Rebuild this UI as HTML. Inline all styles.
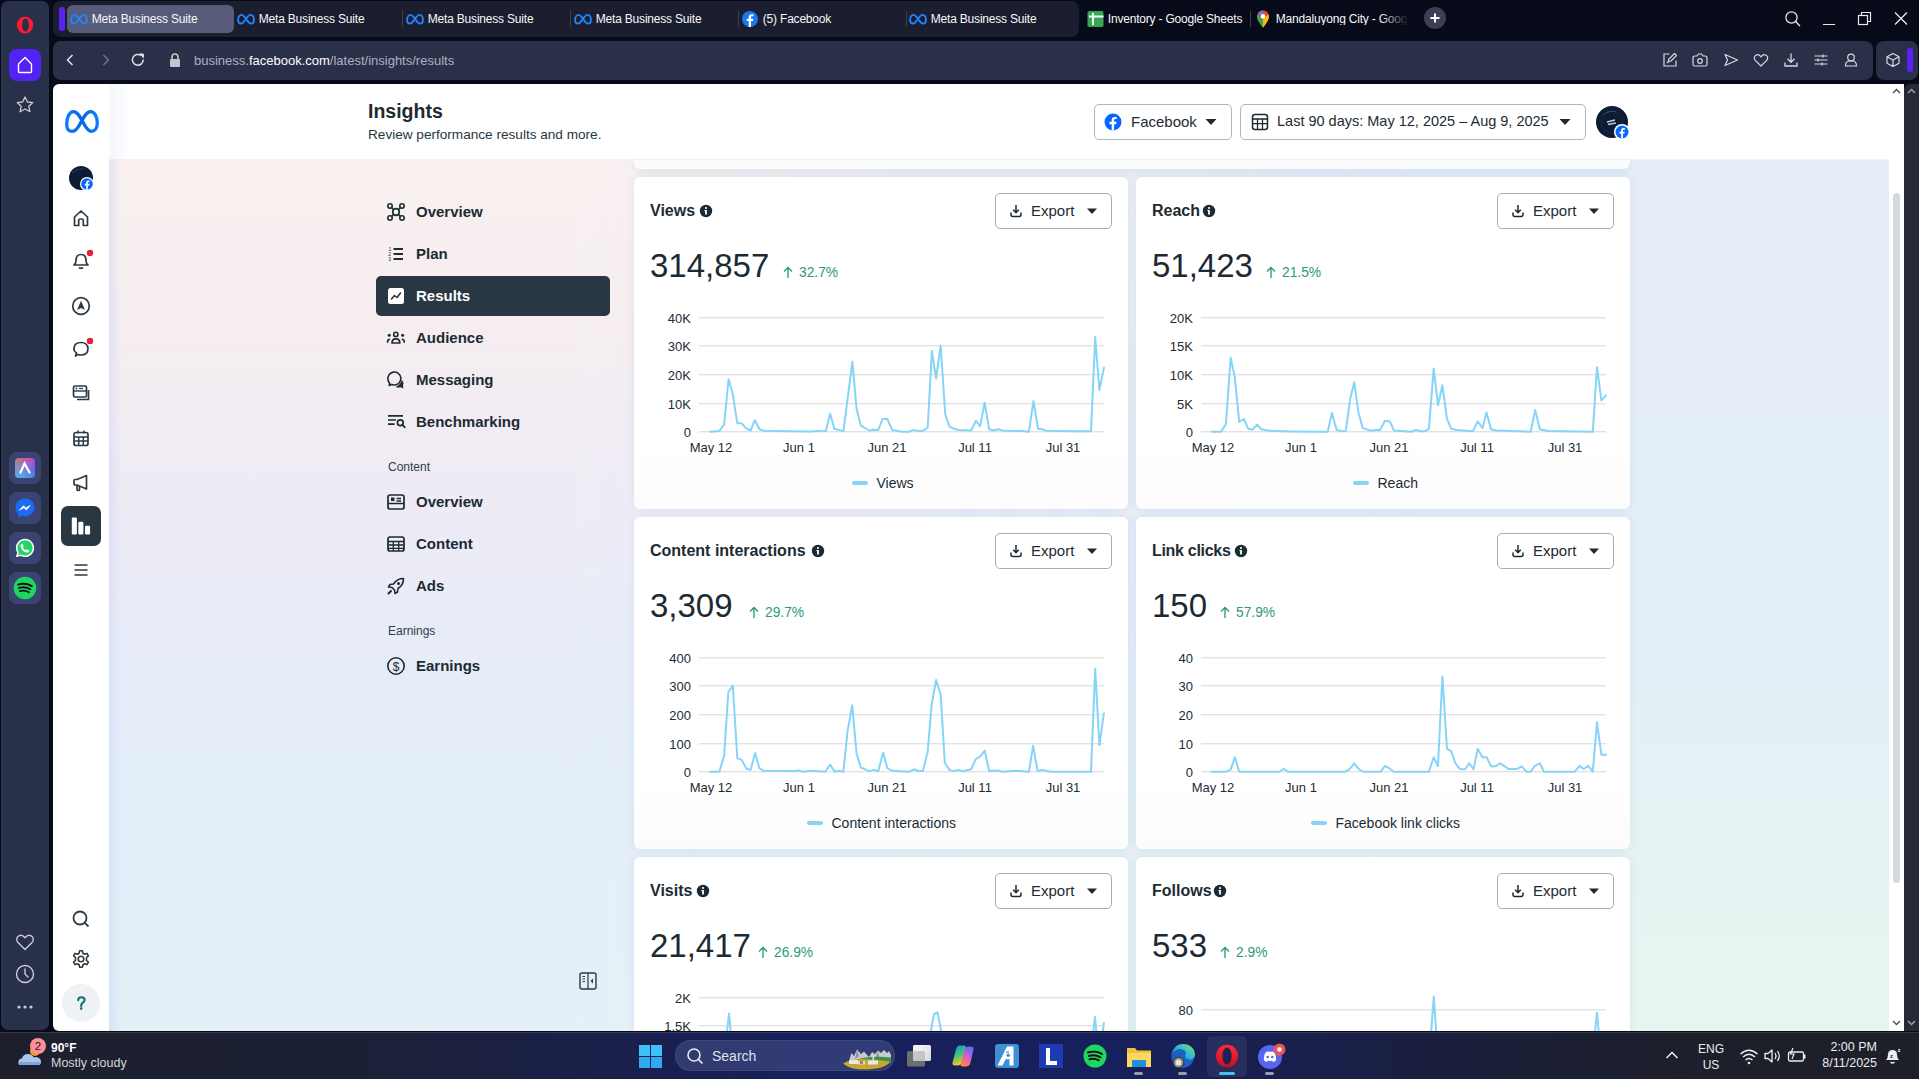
<!DOCTYPE html>
<html><head><meta charset="utf-8"><title>Insights</title>
<style>
html,body{margin:0;padding:0;width:1919px;height:1079px;overflow:hidden;background:#070a18;}
.r{position:absolute;display:block;}
.t{position:absolute;white-space:nowrap;line-height:1;font-family:"Liberation Sans", sans-serif;}
#vp{position:absolute;left:0;top:0;width:1919px;height:1030px;overflow:hidden;}
</style></head><body>
<div class="r" style="left:0px;top:0px;width:1919px;height:1032px;background:#070a18;"></div>
<div class="r" style="left:1px;top:1px;width:48px;height:1029px;background:#29304a;border-radius:7px;"></div>
<svg class="r" style="left:13px;top:13px;" width="24" height="24" viewBox="0 0 24 24"><ellipse cx="12" cy="12" rx="8.2" ry="8.6" fill="#ff1b2d"/><ellipse cx="12.4" cy="12" rx="3.4" ry="6.6" fill="#29304a"/></svg>
<div class="r" style="left:9px;top:49px;width:32px;height:32px;background:#5322f5;border-radius:8px;"></div>
<svg class="r" style="left:9px;top:49px;" width="32" height="32" viewBox="0 0 32 32"><path d="M9.5,15 L16,8.5 L22.5,15 L22.5,22.5 Q22.5,23.5 21.5,23.5 L10.5,23.5 Q9.5,23.5 9.5,22.5 Z" fill="none" stroke="#fff" stroke-width="1.4" stroke-linejoin="round"/></svg>
<svg class="r" style="left:13px;top:93px;" width="24" height="24" viewBox="0 0 24 24"><path d="M12,4 L14.4,9 L19.8,9.6 L15.8,13.3 L16.9,18.7 L12,16 L7.1,18.7 L8.2,13.3 L4.2,9.6 L9.6,9 Z" fill="none" stroke="#c9ccd6" stroke-width="1.3" stroke-linejoin="round"/></svg>
<div class="r" style="left:9px;top:452px;width:32px;height:32px;background:#3a4472;border-radius:8px;"></div>
<div class="r" style="left:9px;top:492px;width:32px;height:32px;background:#3a4472;border-radius:8px;"></div>
<div class="r" style="left:9px;top:532px;width:32px;height:32px;background:#3a4472;border-radius:8px;"></div>
<div class="r" style="left:9px;top:572px;width:32px;height:32px;background:#3a4472;border-radius:8px;"></div>
<svg class="r" style="left:14px;top:457px;" width="22" height="22" viewBox="0 0 22 22"><defs><linearGradient id="ag" x1="0" y1="0" x2="1" y2="1"><stop offset="0" stop-color="#f2603a"/><stop offset="0.5" stop-color="#b44fd6"/><stop offset="1" stop-color="#4a3ff5"/></linearGradient><linearGradient id="ag2" x1="0" y1="1" x2="0.6" y2="0"><stop offset="0" stop-color="#40c8e8" stop-opacity="0.9"/><stop offset="1" stop-color="#40c8e8" stop-opacity="0"/></linearGradient></defs><rect x="1" y="1" width="20" height="20" rx="4" fill="url(#ag)"/><rect x="1" y="1" width="20" height="20" rx="4" fill="url(#ag2)"/><path d="M6.5,15.5 L10.5,6.5 L15.5,15.5" fill="none" stroke="#fff" stroke-width="2.2" stroke-linecap="round"/></svg>
<svg class="r" style="left:14px;top:497px;" width="22" height="22" viewBox="0 0 22 22"><path d="M11,1.5 C5.6,1.5 1.5,5.4 1.5,10.6 C1.5,13.3 2.6,15.6 4.4,17.2 L4.4,20.5 L7.5,18.8 C8.6,19.1 9.8,19.3 11,19.3 C16.4,19.3 20.5,15.4 20.5,10.3 C20.5,5.4 16.4,1.5 11,1.5 Z" fill="#1b6cf5"/><path d="M5.5,13 L9.5,8.8 L11.7,11 L16.3,8.6 L12.3,12.9 L10.1,10.7 Z" fill="#fff" stroke="#fff" stroke-width="0.8" stroke-linejoin="round"/></svg>
<svg class="r" style="left:14px;top:537px;" width="22" height="22" viewBox="0 0 22 22"><path d="M11,1.8 C6,1.8 1.9,5.9 1.9,10.9 C1.9,12.6 2.4,14.2 3.2,15.6 L1.8,20.3 L6.6,19 C7.9,19.7 9.4,20.1 11,20.1 C16,20.1 20.1,16 20.1,11 C20.1,5.9 16,1.8 11,1.8 Z" fill="#fff"/><path d="M11,3.3 C6.8,3.3 3.4,6.7 3.4,10.9 C3.4,12.5 3.9,14 4.8,15.2 L4,18.2 L7.1,17.4 C8.2,18.1 9.6,18.5 11,18.5 C15.2,18.5 18.6,15.1 18.6,10.9 C18.6,6.7 15.2,3.3 11,3.3 Z" fill="#25d366"/><path d="M7.8,6.8 C8.2,6.6 8.6,6.7 8.8,7.1 L9.6,9 C9.7,9.3 9.6,9.6 9.4,9.8 L8.9,10.3 C9.5,11.6 10.5,12.6 11.8,13.2 L12.3,12.6 C12.5,12.4 12.8,12.3 13.1,12.5 L14.9,13.4 C15.3,13.6 15.4,14 15.2,14.3 C14.7,15.3 13.7,15.8 12.6,15.5 C9.6,14.7 7.3,12.4 6.6,9.4 C6.3,8.3 6.9,7.2 7.8,6.8 Z" fill="#fff"/></svg>
<svg class="r" style="left:13px;top:576px;" width="24" height="24" viewBox="0 0 24 24"><circle cx="12" cy="12" r="11.3" fill="#1ed760"/><path d="M5.2,8.6 C9.3,7.3 14.6,7.7 18.8,10.1 M6,11.9 C9.6,10.9 14,11.3 17.3,13.3 M6.8,15.1 C9.8,14.3 13.2,14.6 15.8,16.2" fill="none" stroke="#111" stroke-width="1.9" stroke-linecap="round"/></svg>
<svg class="r" style="left:13px;top:930px;" width="24" height="24" viewBox="0 0 24 24"><path d="M12,19.5 L5,12.5 C3,10.5 3.3,7 5.8,5.8 C7.9,4.8 10.3,5.6 12,7.8 C13.7,5.6 16.1,4.8 18.2,5.8 C20.7,7 21,10.5 19,12.5 Z" fill="none" stroke="#c9ccd6" stroke-width="1.4" stroke-linejoin="round"/></svg>
<svg class="r" style="left:13px;top:962px;" width="24" height="24" viewBox="0 0 24 24"><circle cx="12" cy="12" r="8.5" fill="none" stroke="#c9ccd6" stroke-width="1.4"/><path d="M12,7 L12,12 L15,15" fill="none" stroke="#c9ccd6" stroke-width="1.4" stroke-linecap="round"/></svg>
<svg class="r" style="left:13px;top:995px;" width="24" height="24" viewBox="0 0 24 24"><circle cx="6" cy="12" r="1.6" fill="#c9ccd6"/><circle cx="12" cy="12" r="1.6" fill="#c9ccd6"/><circle cx="18" cy="12" r="1.6" fill="#c9ccd6"/></svg>
<div class="r" style="left:53px;top:1px;width:1026px;height:36px;background:#1b1e2f;border-radius:8px;"></div>
<div class="r" style="left:59px;top:7px;width:6px;height:24px;background:#5b20f6;border-radius:3px;"></div>
<div class="r" style="left:67px;top:5px;width:167px;height:28px;background:#585c7b;border-radius:6px;"></div>
<svg class="r" style="left:69px;top:10px;" width="20" height="18" viewBox="0 0 20 18"><g transform="translate(10,9.2) scale(0.88) translate(-10,-6)"><path d="M1,7.5 C1,3.5 2.8,1 5,1 C7.3,1 9,3.8 11,7 C12.8,9.9 14.2,11 15.6,11 C17.6,11 19,9.3 19,6.8 C19,3.3 17.3,1 15,1 C12.7,1 11,3.8 9,7 C7.2,9.9 5.8,11 4.4,11 C2.4,11 1,9.8 1,7.5 Z" fill="none" stroke="#1f84ff" stroke-width="2.1" stroke-linejoin="round"/></g></svg>
<div class="t" style="left:91.8px;top:12.84px;font-size:12px;color:#f7f7fa;font-weight:normal;letter-spacing:-0.2px;">Meta Business Suite</div>
<svg class="r" style="left:236px;top:10px;" width="20" height="18" viewBox="0 0 20 18"><g transform="translate(10,9.2) scale(0.88) translate(-10,-6)"><path d="M1,7.5 C1,3.5 2.8,1 5,1 C7.3,1 9,3.8 11,7 C12.8,9.9 14.2,11 15.6,11 C17.6,11 19,9.3 19,6.8 C19,3.3 17.3,1 15,1 C12.7,1 11,3.8 9,7 C7.2,9.9 5.8,11 4.4,11 C2.4,11 1,9.8 1,7.5 Z" fill="none" stroke="#1f84ff" stroke-width="2.1" stroke-linejoin="round"/></g></svg>
<div class="t" style="left:258.8px;top:12.84px;font-size:12px;color:#f7f7fa;font-weight:normal;letter-spacing:-0.2px;">Meta Business Suite</div>
<svg class="r" style="left:405px;top:10px;" width="20" height="18" viewBox="0 0 20 18"><g transform="translate(10,9.2) scale(0.88) translate(-10,-6)"><path d="M1,7.5 C1,3.5 2.8,1 5,1 C7.3,1 9,3.8 11,7 C12.8,9.9 14.2,11 15.6,11 C17.6,11 19,9.3 19,6.8 C19,3.3 17.3,1 15,1 C12.7,1 11,3.8 9,7 C7.2,9.9 5.8,11 4.4,11 C2.4,11 1,9.8 1,7.5 Z" fill="none" stroke="#1f84ff" stroke-width="2.1" stroke-linejoin="round"/></g></svg>
<div class="t" style="left:427.8px;top:12.84px;font-size:12px;color:#f7f7fa;font-weight:normal;letter-spacing:-0.2px;">Meta Business Suite</div>
<svg class="r" style="left:573px;top:10px;" width="20" height="18" viewBox="0 0 20 18"><g transform="translate(10,9.2) scale(0.88) translate(-10,-6)"><path d="M1,7.5 C1,3.5 2.8,1 5,1 C7.3,1 9,3.8 11,7 C12.8,9.9 14.2,11 15.6,11 C17.6,11 19,9.3 19,6.8 C19,3.3 17.3,1 15,1 C12.7,1 11,3.8 9,7 C7.2,9.9 5.8,11 4.4,11 C2.4,11 1,9.8 1,7.5 Z" fill="none" stroke="#1f84ff" stroke-width="2.1" stroke-linejoin="round"/></g></svg>
<div class="t" style="left:595.8px;top:12.84px;font-size:12px;color:#f7f7fa;font-weight:normal;letter-spacing:-0.2px;">Meta Business Suite</div>
<svg class="r" style="left:741px;top:10px;" width="18" height="18" viewBox="0 0 18 18"><circle cx="9" cy="9" r="8" fill="#1877f2"/><path d="M10,17 L10,11 L12,11 L12.4,8.8 L10,8.8 L10,7.4 C10,6.7 10.3,6.3 11.1,6.3 L12.5,6.3 L12.5,4.3 C12,4.2 11.3,4.2 10.6,4.2 C8.7,4.2 7.7,5.3 7.7,7.2 L7.7,8.8 L5.7,8.8 L5.7,11 L7.7,11 L7.7,17 Z" fill="#fff"/></svg>
<div class="t" style="left:762.8px;top:12.84px;font-size:12px;color:#f7f7fa;font-weight:normal;letter-spacing:-0.2px;">(5) Facebook</div>
<svg class="r" style="left:908px;top:10px;" width="20" height="18" viewBox="0 0 20 18"><g transform="translate(10,9.2) scale(0.88) translate(-10,-6)"><path d="M1,7.5 C1,3.5 2.8,1 5,1 C7.3,1 9,3.8 11,7 C12.8,9.9 14.2,11 15.6,11 C17.6,11 19,9.3 19,6.8 C19,3.3 17.3,1 15,1 C12.7,1 11,3.8 9,7 C7.2,9.9 5.8,11 4.4,11 C2.4,11 1,9.8 1,7.5 Z" fill="none" stroke="#1f84ff" stroke-width="2.1" stroke-linejoin="round"/></g></svg>
<div class="t" style="left:930.8px;top:12.84px;font-size:12px;color:#f7f7fa;font-weight:normal;letter-spacing:-0.2px;">Meta Business Suite</div>
<svg class="r" style="left:1086px;top:10px;" width="18" height="18" viewBox="0 0 18 18"><rect x="1.5" y="1" width="16" height="16" rx="1.8" fill="#36a852"/><path d="M3,6.5 L17.5,6.5 M7,3 L7,15" stroke="#fff" stroke-width="1.9"/></svg>
<div class="t" style="left:1107.8px;top:12.84px;font-size:12px;color:#f7f7fa;font-weight:normal;letter-spacing:-0.2px;">Inventory - Google Sheets</div>
<svg class="r" style="left:1254px;top:9px;" width="18" height="20" viewBox="0 0 18 20"><path d="M9,1.5 C5.4,1.5 3,4.2 3,7.4 C3,11.5 9,18.5 9,18.5 C9,18.5 15,11.5 15,7.4 C15,4.2 12.6,1.5 9,1.5 Z" fill="#ea4335"/><path d="M3.5,5.5 L9,11 L9,18.5 C9,18.5 3,11.5 3,7.4 Z" fill="#34a853"/><path d="M14.5,5.3 L9,10.5 L9,18.5 C9,18.5 15,11.5 15,7.4 Z" fill="#fbbc04"/><path d="M4,4.3 C5,2.6 6.8,1.5 9,1.5 L9,7.5 Z" fill="#4285f4"/><circle cx="9" cy="7.4" r="2.3" fill="#fff"/></svg>
<div class="t" style="left:1275.8px;top:12.84px;font-size:12px;color:#f7f7fa;font-weight:normal;letter-spacing:-0.2px;max-width:136px;overflow:hidden;">Mandaluyong City - Google Maps</div>
<div class="r" style="left:1380px;top:8px;width:36px;height:22px;background:linear-gradient(90deg, rgba(7,10,24,0), #070a18 80%);"></div>
<div class="r" style="left:402px;top:11px;width:1px;height:16px;background:#3a3e52;"></div>
<div class="r" style="left:570px;top:11px;width:1px;height:16px;background:#3a3e52;"></div>
<div class="r" style="left:738px;top:11px;width:1px;height:16px;background:#3a3e52;"></div>
<div class="r" style="left:906px;top:11px;width:1px;height:16px;background:#3a3e52;"></div>
<div class="r" style="left:1250px;top:11px;width:1px;height:16px;background:#3a3e52;"></div>
<svg class="r" style="left:1424px;top:7px;" width="22" height="22" viewBox="0 0 22 22"><circle cx="11" cy="11" r="11" fill="#3b3f56"/><path d="M11,6.5 L11,15.5 M6.5,11 L15.5,11" stroke="#fff" stroke-width="2"/></svg>
<svg class="r" style="left:1783px;top:9px;" width="20" height="20" viewBox="0 0 20 20"><circle cx="8.5" cy="8.5" r="5.6" fill="none" stroke="#e8e9ee" stroke-width="1.3"/><path d="M12.6,12.6 L17,17" stroke="#e8e9ee" stroke-width="1.4"/></svg>
<div class="r" style="left:1823px;top:24px;width:12px;height:1.3px;background:#e8e9ee;"></div>
<svg class="r" style="left:1855px;top:9px;" width="20" height="20" viewBox="0 0 20 20"><rect x="3.5" y="6.5" width="9" height="9" fill="none" stroke="#e8e9ee" stroke-width="1.2"/><path d="M6.5,6.5 L6.5,3.5 L15.5,3.5 L15.5,12.5 L12.5,12.5" fill="none" stroke="#e8e9ee" stroke-width="1.2"/></svg>
<svg class="r" style="left:1891px;top:9px;" width="20" height="20" viewBox="0 0 20 20"><path d="M4,3.5 L16,15.5 M16,3.5 L4,15.5" stroke="#e8e9ee" stroke-width="1.3"/></svg>
<div class="r" style="left:53px;top:41px;width:1820px;height:39px;background:#2b3049;border-radius:8px;"></div>
<div class="r" style="left:1876px;top:41px;width:42px;height:39px;background:#2b3049;border-radius:8px;"></div>
<div class="r" style="left:1907px;top:48px;width:6px;height:24px;background:#5b20f6;border-radius:3px;"></div>
<svg class="r" style="left:60px;top:50px;" width="20" height="20" viewBox="0 0 20 20"><path d="M12.5,5 L7.5,10 L12.5,15" fill="none" stroke="#dfe1ea" stroke-width="1.5"/></svg>
<svg class="r" style="left:96px;top:50px;" width="20" height="20" viewBox="0 0 20 20"><path d="M7.5,5 L12.5,10 L7.5,15" fill="none" stroke="#6f7389" stroke-width="1.5"/></svg>
<svg class="r" style="left:128px;top:50px;" width="20" height="20" viewBox="0 0 20 20"><path d="M15.2,9.5 A5.4,5.4 0 1 1 13.2,5.6" fill="none" stroke="#dfe1ea" stroke-width="1.5"/><path d="M11.8,3.8 L15.6,4.2 L15.2,8" fill="#dfe1ea" stroke="#dfe1ea" stroke-width="1" stroke-linejoin="round"/></svg>
<svg class="r" style="left:165px;top:50px;" width="20" height="20" viewBox="0 0 20 20"><rect x="5" y="9" width="10" height="8" rx="1.2" fill="#c4c6ce"/><path d="M7,9.5 L7,7 A3,3 0 0 1 13,7 L13,9.5" fill="none" stroke="#c4c6ce" stroke-width="1.6"/></svg>
<div class="t" style="left:194px;top:54.00px;font-size:13px;color:#aeb1c0;font-weight:normal;">business.<span style="color:#ffffff">facebook.com</span>/latest/insights/results</div>
<svg class="r" style="left:1660px;top:50px;" width="20" height="20" viewBox="0 0 20 20"><path d="M9.5,4 L4,4 L4,16 L16,16 L16,10.5" fill="none" stroke="#d6d8e0" stroke-width="1.2"/><path d="M8,12 L9,9 L14.5,3.5 L16.5,5.5 L11,11 Z M7,13 L9,11" fill="none" stroke="#d6d8e0" stroke-width="1.2" stroke-linejoin="round"/></svg>
<svg class="r" style="left:1690px;top:50px;" width="20" height="20" viewBox="0 0 20 20"><path d="M3,8 Q3,6 5,6 L7,6 L8.5,4 L11.5,4 L13,6 L15,6 Q17,6 17,8 L17,14.5 Q17,16 15.5,16 L4.5,16 Q3,16 3,14.5 Z" fill="none" stroke="#d6d8e0" stroke-width="1.2"/><circle cx="10" cy="11" r="2.3" fill="none" stroke="#d6d8e0" stroke-width="1.2"/></svg>
<svg class="r" style="left:1721px;top:50px;" width="20" height="20" viewBox="0 0 20 20"><path d="M4,4.5 L16.5,10 L4,15.5 L6.5,10 Z" fill="none" stroke="#d6d8e0" stroke-width="1.2" stroke-linejoin="round"/></svg>
<svg class="r" style="left:1751px;top:50px;" width="20" height="20" viewBox="0 0 20 20"><path d="M10,16 L4.3,10.3 C2.8,8.8 3,6.2 4.8,5.2 C6.5,4.2 8.5,4.8 10,6.8 C11.5,4.8 13.5,4.2 15.2,5.2 C17,6.2 17.2,8.8 15.7,10.3 Z" fill="none" stroke="#d6d8e0" stroke-width="1.2" stroke-linejoin="round"/></svg>
<svg class="r" style="left:1781px;top:50px;" width="20" height="20" viewBox="0 0 20 20"><path d="M10,3.5 L10,12 M6.5,8.8 L10,12.3 L13.5,8.8 M4,12.5 L4,16 L16,16 L16,12.5" fill="none" stroke="#d6d8e0" stroke-width="1.3"/></svg>
<svg class="r" style="left:1811px;top:50px;" width="20" height="20" viewBox="0 0 20 20"><path d="M3.5,6 L16.5,6 M3.5,10 L16.5,10 M3.5,14 L16.5,14" stroke="#d6d8e0" stroke-width="1.2"/><path d="M12,4.5 L12,7.5 M7,8.5 L7,11.5 M11,12.5 L11,15.5" stroke="#d6d8e0" stroke-width="1.3"/></svg>
<svg class="r" style="left:1841px;top:50px;" width="20" height="20" viewBox="0 0 20 20"><circle cx="10" cy="7.5" r="3.3" fill="none" stroke="#d6d8e0" stroke-width="1.2"/><path d="M4.5,16 Q4.5,11.5 8,11 L12,11 Q15.5,11.5 15.5,16 Z" fill="none" stroke="#d6d8e0" stroke-width="1.2" stroke-linejoin="round"/></svg>
<svg class="r" style="left:1883px;top:50px;" width="20" height="20" viewBox="0 0 20 20"><path d="M10,3.5 L16,6.8 L16,13.3 L10,16.5 L4,13.3 L4,6.8 Z M4,6.8 L10,10 L16,6.8 M10,10 L10,16.5" fill="none" stroke="#d6d8e0" stroke-width="1.2" stroke-linejoin="round"/></svg>
<div class="r" style="left:53px;top:84px;width:1851px;height:947px;background:#ffffff;border-radius:6px 0 0 6px;"></div>
<div class="r" style="left:109px;top:160px;width:1780px;height:871px;background:linear-gradient(180deg, #e6edf8 0%, #e4eef8 35%, #e3eef8 50%, #e5f2f3 78%, #e8f5ee 100%);"></div>
<div class="r" style="left:109px;top:160px;width:1780px;height:871px;background:linear-gradient(180deg, #f9f0ef 0%, #f5edf0 20%, #eeebf5 40%, #e7ecf8 55%, #e4eef9 70%, #e4eff8 100%);-webkit-mask-image:linear-gradient(90deg, #000 0%, #000 25%, transparent 75%);mask-image:linear-gradient(90deg, #000 0%, #000 25%, transparent 75%);"></div>
<div class="r" style="left:109px;top:160px;width:12px;height:871px;background:linear-gradient(90deg, rgba(190,205,240,0.35), rgba(190,205,240,0));"></div>
<div class="r" style="left:109px;top:84px;width:1780px;height:76px;background:#ffffff;"></div>
<div class="r" style="left:109px;top:84px;width:24px;height:76px;background:linear-gradient(90deg, rgba(240,244,252,0.7), rgba(255,255,255,0));"></div>
<div class="r" style="left:109px;top:159px;width:1780px;height:1px;background:rgba(0,0,0,0.05);"></div>
<div class="t" style="left:368px;top:102.29px;font-size:19.5px;color:#1c2b33;font-weight:bold;">Insights</div>
<div class="t" style="left:368px;top:127.89px;font-size:13.6px;color:#27363f;font-weight:normal;">Review performance results and more.</div>
<div class="r" style="left:1094px;top:104px;width:138px;height:36px;background:#fff;border-radius:5px;box-sizing:border-box;border:1px solid #aeb7c2;"></div>
<svg class="r" style="left:1103px;top:112px;" width="20" height="20" viewBox="0 0 20 20"><circle cx="10" cy="10" r="8.5" fill="#0866ff"/><path d="M11.1,18.5 L11.1,12.2 L13.2,12.2 L13.6,9.8 L11.1,9.8 L11.1,8.3 C11.1,7.6 11.4,7.1 12.3,7.1 L13.7,7.1 L13.7,5 C13.2,4.9 12.5,4.9 11.8,4.9 C9.8,4.9 8.7,6.1 8.7,8.1 L8.7,9.8 L6.5,9.8 L6.5,12.2 L8.7,12.2 L8.7,18.5 Z" fill="#fff"/></svg>
<div class="t" style="left:1131px;top:114.00px;font-size:15px;color:#1c2b33;font-weight:normal;">Facebook</div>
<svg class="r" style="left:1204px;top:117px;" width="14" height="10" viewBox="0 0 14 10"><path d="M1.5,2 L12.5,2 L7,8 Z" fill="#1c2b33"/></svg>
<div class="r" style="left:1240px;top:104px;width:346px;height:36px;background:#fff;border-radius:5px;box-sizing:border-box;border:1px solid #aeb7c2;"></div>
<svg class="r" style="left:1250px;top:112px;" width="20" height="20" viewBox="0 0 20 20"><rect x="2.5" y="2.5" width="15" height="15" rx="2.5" fill="none" stroke="#1c2b33" stroke-width="1.5"/><path d="M2.5,7 L17.5,7 M2.5,11.7 L17.5,11.7 M7.5,7 L7.5,17.5 M12.5,7 L12.5,17.5" stroke="#1c2b33" stroke-width="1.3"/></svg>
<div class="t" style="left:1277px;top:114.43px;font-size:14.5px;color:#1c2b33;font-weight:normal;">Last 90 days: May 12, 2025 – Aug 9, 2025</div>
<svg class="r" style="left:1558px;top:117px;" width="14" height="10" viewBox="0 0 14 10"><path d="M1.5,2 L12.5,2 L7,8 Z" fill="#1c2b33"/></svg>
<svg class="r" style="left:1595px;top:105px;" width="36" height="36" viewBox="0 0 36 36"><circle cx="17" cy="17" r="16" fill="#0d1b34"/><circle cx="17" cy="17" r="11" fill="none" stroke="#1a2a48" stroke-width="1"/><path d="M12,17 L20,15 M13,19.5 L21,18" stroke="#c8ccd8" stroke-width="1.6"/><path d="M8,10 Q14,5 21,7" fill="none" stroke="#3c6fb0" stroke-width="1" stroke-dasharray="1.5 1"/><circle cx="27" cy="27" r="8" fill="#fff"/><circle cx="27" cy="27" r="6.5" fill="#0866ff"/><path d="M27.9,33.5 L27.9,28.6 L29.5,28.6 L29.8,26.8 L27.9,26.8 L27.9,25.7 C27.9,25.2 28.1,24.8 28.8,24.8 L29.9,24.8 L29.9,23.2 C29.5,23.1 29,23.1 28.4,23.1 C26.9,23.1 26.1,24 26.1,25.5 L26.1,26.8 L24.4,26.8 L24.4,28.6 L26.1,28.6 L26.1,33.5 Z" fill="#fff"/></svg>
<svg class="r" style="left:63px;top:107px;" width="38" height="28" viewBox="0 0 38 28"><defs><linearGradient id="mg" x1="0" y1="0" x2="1" y2="0"><stop offset="0" stop-color="#0a7cff"/><stop offset="0.5" stop-color="#0668e1"/><stop offset="1" stop-color="#0a7cff"/></linearGradient></defs><path d="M3.70,17.44 C3.70,9.60 6.76,4.70 10.50,4.70 C14.41,4.70 17.30,10.19 20.70,16.46 C23.76,22.14 26.14,24.30 28.52,24.30 C31.92,24.30 34.30,20.97 34.30,16.07 C34.30,9.21 31.41,4.70 27.50,4.70 C23.59,4.70 20.70,10.19 17.30,16.46 C14.24,22.14 11.86,24.30 9.48,24.30 C6.08,24.30 3.70,21.95 3.70,17.44 Z" fill="none" stroke="url(#mg)" stroke-width="3.3" stroke-linejoin="round"/></svg>
<svg class="r" style="left:67px;top:164px;" width="30" height="30" viewBox="0 0 30 30"><circle cx="14" cy="14" r="12" fill="#0d1b34"/><path d="M5,9 Q10,4 17,5" fill="none" stroke="#3c6fb0" stroke-width="0.8" stroke-dasharray="1.2 1"/><circle cx="20" cy="20" r="7" fill="#fff"/><circle cx="20" cy="20" r="5.8" fill="#0866ff"/><path d="M20.8,25.8 L20.8,21.4 L22.2,21.4 L22.5,19.8 L20.8,19.8 L20.8,18.9 C20.8,18.4 21,18.1 21.6,18.1 L22.6,18.1 L22.6,16.7 C22.2,16.6 21.8,16.6 21.3,16.6 C19.9,16.6 19.2,17.4 19.2,18.7 L19.2,19.8 L17.7,19.8 L17.7,21.4 L19.2,21.4 L19.2,25.8 Z" fill="#fff"/></svg>
<svg class="r" style="left:71px;top:208px;" width="20" height="20" viewBox="0 0 20 20"><path d="M3.5,17.5 L3.5,9 L10,3 L16.5,9 L16.5,17.5 L12.3,17.5 L12.3,12.5 Q12.3,11 10.8,11 L9.2,11 Q7.7,11 7.7,12.5 L7.7,17.5 Z" fill="none" stroke="#2b3a44" stroke-width="1.7" stroke-linejoin="round"/></svg>
<svg class="r" style="left:71px;top:251px;" width="20" height="20" viewBox="0 0 20 20"><path d="M3,14 Q5,12.5 5,9.5 Q5,3.5 10,3.5 Q15,3.5 15,9.5 Q15,12.5 17,14 Z" fill="none" stroke="#2b3a44" stroke-width="1.7" stroke-linejoin="round"/><path d="M8,16.5 Q10,18 12,16.5" fill="none" stroke="#2b3a44" stroke-width="1.7"/></svg>
<svg class="r" style="left:86px;top:249px;" width="8" height="8" viewBox="0 0 8 8"><circle cx="4" cy="4" r="3.2" fill="#e41e3f"/></svg>
<svg class="r" style="left:71px;top:296px;" width="20" height="20" viewBox="0 0 20 20"><circle cx="10" cy="10" r="8.3" fill="none" stroke="#2b3a44" stroke-width="1.7"/><path d="M10,4.8 L14,14 L10,12 L6,14 Z" fill="#2b3a44"/></svg>
<svg class="r" style="left:71px;top:339px;" width="20" height="20" viewBox="0 0 20 20"><path d="M4.5,17 L5.5,14 Q2.5,12 3,9 Q3.5,3.5 10,3.5 Q16.5,3.5 17,9.5 Q17,16 10,16 Q8,16 6.5,15.5 Z" fill="none" stroke="#2b3a44" stroke-width="1.7" stroke-linejoin="round"/></svg>
<svg class="r" style="left:86px;top:337px;" width="8" height="8" viewBox="0 0 8 8"><circle cx="4" cy="4" r="3.2" fill="#e41e3f"/></svg>
<svg class="r" style="left:71px;top:383px;" width="20" height="20" viewBox="0 0 20 20"><rect x="2.5" y="3" width="13" height="11" rx="1.5" fill="none" stroke="#2b3a44" stroke-width="1.7"/><path d="M2.5,8 L15.5,8" stroke="#2b3a44" stroke-width="1.4"/><circle cx="5.5" cy="5.5" r="0.9" fill="#2b3a44"/><path d="M8,5.5 L12,5.5" stroke="#2b3a44" stroke-width="1.2"/><path d="M17.5,7 L17.5,16.5 L6,16.5" fill="none" stroke="#2b3a44" stroke-width="1.7"/></svg>
<svg class="r" style="left:71px;top:428px;" width="20" height="20" viewBox="0 0 20 20"><rect x="3" y="4.5" width="14" height="13" rx="2" fill="none" stroke="#2b3a44" stroke-width="1.7"/><path d="M3,9 L17,9 M3,13 L17,13 M7.7,9 L7.7,17.5 M12.3,9 L12.3,17.5 M7,2.5 L7,5.5 M13,2.5 L13,5.5" stroke="#2b3a44" stroke-width="1.5"/></svg>
<svg class="r" style="left:71px;top:472px;" width="20" height="20" viewBox="0 0 20 20"><path d="M3,8.5 L3,12 Q3,13 4,13 L6,13 L15.5,17 L15.5,3.5 L6,7.5 L4,7.5 Q3,7.5 3,8.5 Z" fill="none" stroke="#2b3a44" stroke-width="1.7" stroke-linejoin="round"/><path d="M6,13 L6,17.5 Q6,18.5 7.3,18.5 Q8.5,18.5 8.5,17.5 L8.5,14" fill="none" stroke="#2b3a44" stroke-width="1.7"/></svg>
<div class="r" style="left:61px;top:506px;width:40px;height:40px;background:#283742;border-radius:7px;"></div>
<svg class="r" style="left:71px;top:516px;" width="20" height="20" viewBox="0 0 20 20"><rect x="0.8" y="1.4" width="5.1" height="17.1" rx="1.2" fill="#fff"/><rect x="7.3" y="5.8" width="5.1" height="12.7" rx="1.2" fill="#fff"/><rect x="14" y="9.7" width="5.1" height="8.8" rx="1.2" fill="#fff"/></svg>
<svg class="r" style="left:71px;top:560px;" width="20" height="20" viewBox="0 0 20 20"><path d="M3.5,5 L16.5,5 M3.5,10 L16.5,10 M3.5,15 L16.5,15" stroke="#2b3a44" stroke-width="1.7"/></svg>
<svg class="r" style="left:71px;top:909px;" width="20" height="20" viewBox="0 0 20 20"><circle cx="9" cy="9" r="6.5" fill="none" stroke="#2b3a44" stroke-width="1.8"/><path d="M13.8,13.8 L17.5,17.5" stroke="#2b3a44" stroke-width="1.8"/></svg>
<svg class="r" style="left:71px;top:949px;" width="20" height="20" viewBox="0 0 20 20"><path d="M8.6,1.8 L11.4,1.8 L11.9,4.3 L13.6,5.3 L16,4.4 L17.4,6.8 L15.5,8.5 L15.5,11.5 L17.4,13.2 L16,15.6 L13.6,14.7 L11.9,15.7 L11.4,18.2 L8.6,18.2 L8.1,15.7 L6.4,14.7 L4,15.6 L2.6,13.2 L4.5,11.5 L4.5,8.5 L2.6,6.8 L4,4.4 L6.4,5.3 L8.1,4.3 Z" fill="none" stroke="#2b3a44" stroke-width="1.6" stroke-linejoin="round"/><circle cx="10" cy="10" r="2.8" fill="none" stroke="#2b3a44" stroke-width="1.6"/></svg>
<svg class="r" style="left:61px;top:983px;" width="40" height="40" viewBox="0 0 40 40"><circle cx="20" cy="20" r="19" fill="#eff2f5"/><path d="M17.2,17.2 Q17.2,14.2 20.5,14.2 Q23.6,14.2 23.6,17 Q23.6,18.8 21.5,20 Q20.2,20.8 20.2,22.6 L20.2,23.3" fill="none" stroke="#17707f" stroke-width="2.1" stroke-linecap="round"/><circle cx="20.2" cy="25.6" r="1.3" fill="#17707f"/></svg>
<svg class="r" style="left:578px;top:971px;" width="20" height="20" viewBox="0 0 20 20"><rect x="2" y="2" width="16" height="16" rx="2" fill="none" stroke="#2b3a44" stroke-width="1.4"/><path d="M10,2 L10,18 M4.5,5.5 L7,5.5 M4.5,8 L7,8 M4.5,10.5 L7,10.5" stroke="#2b3a44" stroke-width="1.2"/><path d="M15,7.5 L12.5,10 L15,12.5 Z" fill="#2b3a44"/></svg>
<div class="r" style="left:376px;top:276px;width:234px;height:40px;background:#283742;border-radius:5px;"></div>
<div class="t" style="left:416px;top:203.80px;font-size:15px;color:#1c2b33;font-weight:bold;">Overview</div>
<svg class="r" style="left:386px;top:202px;" width="20" height="20" viewBox="0 0 20 20"><circle cx="4" cy="4" r="2.2" fill="none" stroke="#1c2b33" stroke-width="1.6"/><circle cx="16" cy="4" r="2.2" fill="none" stroke="#1c2b33" stroke-width="1.6"/><circle cx="4" cy="16" r="2.2" fill="none" stroke="#1c2b33" stroke-width="1.6"/><circle cx="16" cy="16" r="2.2" fill="none" stroke="#1c2b33" stroke-width="1.6"/><circle cx="10" cy="10" r="3.3" fill="none" stroke="#1c2b33" stroke-width="1.7"/><path d="M5.6,5.6 L7.7,7.7 M14.4,5.6 L12.3,7.7 M5.6,14.4 L7.7,12.3 M14.4,14.4 L12.3,12.3" stroke="#1c2b33" stroke-width="1.6"/></svg>
<div class="t" style="left:416px;top:245.80px;font-size:15px;color:#1c2b33;font-weight:bold;">Plan</div>
<svg class="r" style="left:386px;top:244px;" width="20" height="20" viewBox="0 0 20 20"><path d="M7.5,5 L17,5 M7.5,10 L17,10 M7.5,15 L17,15" stroke="#1c2b33" stroke-width="1.8"/><text x="2.5" y="7" font-size="5" font-family="Liberation Sans" fill="#1c2b33">1</text><text x="2.3" y="12" font-size="5" font-family="Liberation Sans" fill="#1c2b33">2</text><text x="2.3" y="17" font-size="5" font-family="Liberation Sans" fill="#1c2b33">3</text></svg>
<div class="t" style="left:416px;top:287.80px;font-size:15px;color:#ffffff;font-weight:bold;">Results</div>
<svg class="r" style="left:386px;top:286px;" width="20" height="20" viewBox="0 0 20 20"><rect x="2" y="2" width="16" height="16" rx="2.5" fill="#fff"/><path d="M5.5,13 L8.5,9.5 L11,11.5 L14.5,7" fill="none" stroke="#283742" stroke-width="1.6" stroke-linejoin="round" stroke-linecap="round"/></svg>
<div class="t" style="left:416px;top:329.80px;font-size:15px;color:#1c2b33;font-weight:bold;">Audience</div>
<svg class="r" style="left:386px;top:328px;" width="20" height="20" viewBox="0 0 20 20"><circle cx="9.8" cy="6.4" r="2.1" fill="none" stroke="#1c2b33" stroke-width="1.6"/><path d="M6,15 Q6,10.8 9.9,10.8 Q13.8,10.8 13.8,15 Z" fill="none" stroke="#1c2b33" stroke-width="1.7" stroke-linejoin="round"/><circle cx="3.2" cy="7.3" r="1.5" fill="#1c2b33"/><circle cx="16.6" cy="7.3" r="1.5" fill="#1c2b33"/><path d="M1.6,14.2 Q1.4,11.6 3.4,11.2 M18.2,14.2 Q18.4,11.6 16.4,11.2" fill="none" stroke="#1c2b33" stroke-width="1.6" stroke-linecap="round"/></svg>
<div class="t" style="left:416px;top:371.80px;font-size:15px;color:#1c2b33;font-weight:bold;">Messaging</div>
<svg class="r" style="left:386px;top:370px;" width="20" height="20" viewBox="0 0 20 20"><path d="M3.8,13.6 L3.2,15.4 L5.6,14.6 Q6.8,15 8.2,15 A6.5,6.5 0 1 0 2.2,10.5 Q2.6,12.3 3.8,13.6 Z" fill="none" stroke="#1c2b33" stroke-width="1.6" stroke-linejoin="round"/><path d="M16,9.8 Q18.2,12.6 17,15.6 L17.4,18.4 L14.6,17.2 Q12,18 9.6,16.9 Q14.4,15.4 16,9.8 Z" fill="#1c2b33"/></svg>
<div class="t" style="left:416px;top:413.80px;font-size:15px;color:#1c2b33;font-weight:bold;">Benchmarking</div>
<svg class="r" style="left:386px;top:412px;" width="20" height="20" viewBox="0 0 20 20"><path d="M2,3.8 L17,3.8 M2,8 L10,8 M2,12.2 L8.6,12.2" stroke="#1c2b33" stroke-width="1.7"/><circle cx="14.3" cy="10.8" r="2.9" fill="none" stroke="#1c2b33" stroke-width="1.7"/><path d="M16.4,12.9 L18.8,15.3" stroke="#1c2b33" stroke-width="1.8" stroke-linecap="round"/></svg>
<div class="t" style="left:416px;top:493.80px;font-size:15px;color:#1c2b33;font-weight:bold;">Overview</div>
<svg class="r" style="left:386px;top:492px;" width="20" height="20" viewBox="0 0 20 20"><rect x="2" y="3" width="16" height="14" rx="2" fill="none" stroke="#1c2b33" stroke-width="1.7"/><path d="M2,11.5 L18,11.5 M10.5,6.5 L15,6.5 M10.5,9 L15,9" stroke="#1c2b33" stroke-width="1.4"/><rect x="5" y="5.5" width="3.5" height="3.5" fill="#1c2b33"/></svg>
<div class="t" style="left:416px;top:535.80px;font-size:15px;color:#1c2b33;font-weight:bold;">Content</div>
<svg class="r" style="left:386px;top:534px;" width="20" height="20" viewBox="0 0 20 20"><rect x="2" y="3" width="16" height="14" rx="2" fill="none" stroke="#1c2b33" stroke-width="1.7"/><path d="M2,7.5 L18,7.5 M2,11 L18,11 M2,14.3 L18,14.3 M7.3,7.5 L7.3,17 M12.7,7.5 L12.7,17" stroke="#1c2b33" stroke-width="1.3"/></svg>
<div class="t" style="left:416px;top:577.80px;font-size:15px;color:#1c2b33;font-weight:bold;">Ads</div>
<svg class="r" style="left:386px;top:576px;" width="20" height="20" viewBox="0 0 20 20"><path d="M17.5,2.5 Q11,2.5 7.5,8 L4,8.5 L2.5,11 L6,11.5 L8.5,14 L9,17.5 L11.5,16 L12,12.5 Q17.5,9 17.5,2.5 Z" fill="none" stroke="#1c2b33" stroke-width="1.6" stroke-linejoin="round"/><circle cx="12.5" cy="7.5" r="1.5" fill="#1c2b33"/><path d="M5,15 L2.5,17.5" stroke="#1c2b33" stroke-width="2" stroke-linecap="round"/></svg>
<div class="t" style="left:416px;top:657.80px;font-size:15px;color:#1c2b33;font-weight:bold;">Earnings</div>
<svg class="r" style="left:386px;top:656px;" width="20" height="20" viewBox="0 0 20 20"><circle cx="10" cy="10" r="8.2" fill="none" stroke="#1c2b33" stroke-width="1.6"/><text x="10" y="14.5" text-anchor="middle" font-size="12" font-family="Liberation Sans" fill="#1c2b33">$</text></svg>
<div class="t" style="left:388px;top:460.84px;font-size:12px;color:#2f3e47;font-weight:normal;">Content</div>
<div class="t" style="left:388px;top:624.84px;font-size:12px;color:#2f3e47;font-weight:normal;">Earnings</div>
<div class="r" style="left:634px;top:160px;width:996px;height:9px;background:#fbfcfc;border-radius:0 0 6px 6px;box-shadow:0 3px 8px rgba(0,100,170,0.09);"></div>
<div class="r" style="left:634px;top:177px;width:494px;height:332px;background:linear-gradient(180deg,#ffffff 0%,#ffffff 80%,#fcfcfd 100%);border-radius:6px;box-shadow:0 0 8px rgba(0,100,170,0.09);"></div>
<div class="t" style="left:650px;top:203.06px;font-size:16px;color:#1c2b33;font-weight:bold;">Views</div>
<svg class="r" style="left:699px;top:204px;" width="14" height="14" viewBox="0 0 14 14"><circle cx="7" cy="7" r="6.2" fill="#1c2b33"/><rect x="6.1" y="6" width="1.8" height="4.5" fill="#fff"/><circle cx="7" cy="4" r="1.05" fill="#fff"/><rect x="5.4" y="6" width="1.6" height="1" fill="#fff"/></svg>
<div class="r" style="left:995px;top:193px;width:117px;height:36px;background:#fff;border-radius:5px;box-sizing:border-box;border:1px solid #a3adb8;"></div>
<svg class="r" style="left:1008px;top:203px;" width="16" height="16" viewBox="0 0 16 16"><path d="M8,2 L8,9.5 M5.2,6.8 L8,9.6 L10.8,6.8" fill="none" stroke="#1c2b33" stroke-width="1.5"/><path d="M3,9.5 L3,11.8 Q3,13.5 4.8,13.5 L11.2,13.5 Q13,13.5 13,11.8 L13,9.5" fill="none" stroke="#1c2b33" stroke-width="1.5"/></svg>
<div class="t" style="left:1031px;top:203.30px;font-size:15px;color:#1c2b33;font-weight:normal;">Export</div>
<svg class="r" style="left:1086px;top:206px;" width="12" height="10" viewBox="0 0 12 10"><path d="M1,2.5 L11,2.5 L6,8 Z" fill="#1c2b33"/></svg>
<div class="t" style="left:650px;top:249.07px;font-size:33px;color:#1c2b33;font-weight:normal;">314,857</div>
<svg class="r" style="left:782px;top:265px;" width="12" height="14" viewBox="0 0 12 14"><path d="M6,13 L6,2.5 M2,6.5 L6,2.5 L10,6.5" fill="none" stroke="#2a9a78" stroke-width="1.35"/></svg>
<div class="t" style="left:799px;top:265.62px;font-size:13.8px;color:#2a9a78;font-weight:normal;">32.7%</div>
<div class="r" style="left:699px;top:317px;width:405px;height:1px;background:#e1e2e3;"></div>
<div class="r" style="left:699px;top:318px;width:405px;height:1px;background:#f4f4f5;"></div>
<div class="t" style="right:1228px;top:311.60px;font-size:13px;color:#1c2b33;font-weight:normal;">40K</div>
<div class="r" style="left:699px;top:345px;width:405px;height:1px;background:#e1e2e3;"></div>
<div class="r" style="left:699px;top:346px;width:405px;height:1px;background:#f4f4f5;"></div>
<div class="t" style="right:1228px;top:340.30px;font-size:13px;color:#1c2b33;font-weight:normal;">30K</div>
<div class="r" style="left:699px;top:374px;width:405px;height:1px;background:#e1e2e3;"></div>
<div class="r" style="left:699px;top:375px;width:405px;height:1px;background:#f4f4f5;"></div>
<div class="t" style="right:1228px;top:369.00px;font-size:13px;color:#1c2b33;font-weight:normal;">20K</div>
<div class="r" style="left:699px;top:403px;width:405px;height:1px;background:#e1e2e3;"></div>
<div class="r" style="left:699px;top:404px;width:405px;height:1px;background:#f4f4f5;"></div>
<div class="t" style="right:1228px;top:397.70px;font-size:13px;color:#1c2b33;font-weight:normal;">10K</div>
<div class="r" style="left:699px;top:431px;width:405px;height:1px;background:#e1e2e3;"></div>
<div class="r" style="left:699px;top:432px;width:405px;height:1px;background:#f4f4f5;"></div>
<div class="t" style="right:1228px;top:426.40px;font-size:13px;color:#1c2b33;font-weight:normal;">0</div>
<div class="t" style="left:711px;transform:translateX(-50%);top:440.60px;font-size:13px;color:#1c2b33;font-weight:normal;">May 12</div>
<div class="t" style="left:799px;transform:translateX(-50%);top:440.60px;font-size:13px;color:#1c2b33;font-weight:normal;">Jun 1</div>
<div class="t" style="left:887px;transform:translateX(-50%);top:440.60px;font-size:13px;color:#1c2b33;font-weight:normal;">Jun 21</div>
<div class="t" style="left:975px;transform:translateX(-50%);top:440.60px;font-size:13px;color:#1c2b33;font-weight:normal;">Jul 11</div>
<div class="t" style="left:1063px;transform:translateX(-50%);top:440.60px;font-size:13px;color:#1c2b33;font-weight:normal;">Jul 31</div>
<div class="r" style="left:851.5px;top:481px;width:16px;height:4px;background:#86d4f8;border-radius:2px;"></div>
<div class="t" style="left:876.5px;top:476.15px;font-size:14px;color:#1c2b33;font-weight:normal;">Views</div>
<div class="r" style="left:1136px;top:177px;width:494px;height:332px;background:linear-gradient(180deg,#ffffff 0%,#ffffff 80%,#fcfcfd 100%);border-radius:6px;box-shadow:0 0 8px rgba(0,100,170,0.09);"></div>
<div class="t" style="left:1152px;top:203.06px;font-size:16px;color:#1c2b33;font-weight:bold;">Reach</div>
<svg class="r" style="left:1202px;top:204px;" width="14" height="14" viewBox="0 0 14 14"><circle cx="7" cy="7" r="6.2" fill="#1c2b33"/><rect x="6.1" y="6" width="1.8" height="4.5" fill="#fff"/><circle cx="7" cy="4" r="1.05" fill="#fff"/><rect x="5.4" y="6" width="1.6" height="1" fill="#fff"/></svg>
<div class="r" style="left:1497px;top:193px;width:117px;height:36px;background:#fff;border-radius:5px;box-sizing:border-box;border:1px solid #a3adb8;"></div>
<svg class="r" style="left:1510px;top:203px;" width="16" height="16" viewBox="0 0 16 16"><path d="M8,2 L8,9.5 M5.2,6.8 L8,9.6 L10.8,6.8" fill="none" stroke="#1c2b33" stroke-width="1.5"/><path d="M3,9.5 L3,11.8 Q3,13.5 4.8,13.5 L11.2,13.5 Q13,13.5 13,11.8 L13,9.5" fill="none" stroke="#1c2b33" stroke-width="1.5"/></svg>
<div class="t" style="left:1533px;top:203.30px;font-size:15px;color:#1c2b33;font-weight:normal;">Export</div>
<svg class="r" style="left:1588px;top:206px;" width="12" height="10" viewBox="0 0 12 10"><path d="M1,2.5 L11,2.5 L6,8 Z" fill="#1c2b33"/></svg>
<div class="t" style="left:1152px;top:249.07px;font-size:33px;color:#1c2b33;font-weight:normal;">51,423</div>
<svg class="r" style="left:1265px;top:265px;" width="12" height="14" viewBox="0 0 12 14"><path d="M6,13 L6,2.5 M2,6.5 L6,2.5 L10,6.5" fill="none" stroke="#2a9a78" stroke-width="1.35"/></svg>
<div class="t" style="left:1282px;top:265.62px;font-size:13.8px;color:#2a9a78;font-weight:normal;">21.5%</div>
<div class="r" style="left:1201px;top:317px;width:405px;height:1px;background:#e1e2e3;"></div>
<div class="r" style="left:1201px;top:318px;width:405px;height:1px;background:#f4f4f5;"></div>
<div class="t" style="right:726px;top:311.60px;font-size:13px;color:#1c2b33;font-weight:normal;">20K</div>
<div class="r" style="left:1201px;top:345px;width:405px;height:1px;background:#e1e2e3;"></div>
<div class="r" style="left:1201px;top:346px;width:405px;height:1px;background:#f4f4f5;"></div>
<div class="t" style="right:726px;top:340.30px;font-size:13px;color:#1c2b33;font-weight:normal;">15K</div>
<div class="r" style="left:1201px;top:374px;width:405px;height:1px;background:#e1e2e3;"></div>
<div class="r" style="left:1201px;top:375px;width:405px;height:1px;background:#f4f4f5;"></div>
<div class="t" style="right:726px;top:369.00px;font-size:13px;color:#1c2b33;font-weight:normal;">10K</div>
<div class="r" style="left:1201px;top:403px;width:405px;height:1px;background:#e1e2e3;"></div>
<div class="r" style="left:1201px;top:404px;width:405px;height:1px;background:#f4f4f5;"></div>
<div class="t" style="right:726px;top:397.70px;font-size:13px;color:#1c2b33;font-weight:normal;">5K</div>
<div class="r" style="left:1201px;top:431px;width:405px;height:1px;background:#e1e2e3;"></div>
<div class="r" style="left:1201px;top:432px;width:405px;height:1px;background:#f4f4f5;"></div>
<div class="t" style="right:726px;top:426.40px;font-size:13px;color:#1c2b33;font-weight:normal;">0</div>
<div class="t" style="left:1213px;transform:translateX(-50%);top:440.60px;font-size:13px;color:#1c2b33;font-weight:normal;">May 12</div>
<div class="t" style="left:1301px;transform:translateX(-50%);top:440.60px;font-size:13px;color:#1c2b33;font-weight:normal;">Jun 1</div>
<div class="t" style="left:1389px;transform:translateX(-50%);top:440.60px;font-size:13px;color:#1c2b33;font-weight:normal;">Jun 21</div>
<div class="t" style="left:1477px;transform:translateX(-50%);top:440.60px;font-size:13px;color:#1c2b33;font-weight:normal;">Jul 11</div>
<div class="t" style="left:1565px;transform:translateX(-50%);top:440.60px;font-size:13px;color:#1c2b33;font-weight:normal;">Jul 31</div>
<div class="r" style="left:1352.5px;top:481px;width:16px;height:4px;background:#86d4f8;border-radius:2px;"></div>
<div class="t" style="left:1377.5px;top:476.15px;font-size:14px;color:#1c2b33;font-weight:normal;">Reach</div>
<div class="r" style="left:634px;top:517px;width:494px;height:332px;background:linear-gradient(180deg,#ffffff 0%,#ffffff 80%,#fcfcfd 100%);border-radius:6px;box-shadow:0 0 8px rgba(0,100,170,0.09);"></div>
<div class="t" style="left:650px;top:543.06px;font-size:16px;color:#1c2b33;font-weight:bold;">Content interactions</div>
<svg class="r" style="left:811px;top:544px;" width="14" height="14" viewBox="0 0 14 14"><circle cx="7" cy="7" r="6.2" fill="#1c2b33"/><rect x="6.1" y="6" width="1.8" height="4.5" fill="#fff"/><circle cx="7" cy="4" r="1.05" fill="#fff"/><rect x="5.4" y="6" width="1.6" height="1" fill="#fff"/></svg>
<div class="r" style="left:995px;top:533px;width:117px;height:36px;background:#fff;border-radius:5px;box-sizing:border-box;border:1px solid #a3adb8;"></div>
<svg class="r" style="left:1008px;top:543px;" width="16" height="16" viewBox="0 0 16 16"><path d="M8,2 L8,9.5 M5.2,6.8 L8,9.6 L10.8,6.8" fill="none" stroke="#1c2b33" stroke-width="1.5"/><path d="M3,9.5 L3,11.8 Q3,13.5 4.8,13.5 L11.2,13.5 Q13,13.5 13,11.8 L13,9.5" fill="none" stroke="#1c2b33" stroke-width="1.5"/></svg>
<div class="t" style="left:1031px;top:543.30px;font-size:15px;color:#1c2b33;font-weight:normal;">Export</div>
<svg class="r" style="left:1086px;top:546px;" width="12" height="10" viewBox="0 0 12 10"><path d="M1,2.5 L11,2.5 L6,8 Z" fill="#1c2b33"/></svg>
<div class="t" style="left:650px;top:589.07px;font-size:33px;color:#1c2b33;font-weight:normal;">3,309</div>
<svg class="r" style="left:748px;top:605px;" width="12" height="14" viewBox="0 0 12 14"><path d="M6,13 L6,2.5 M2,6.5 L6,2.5 L10,6.5" fill="none" stroke="#2a9a78" stroke-width="1.35"/></svg>
<div class="t" style="left:765px;top:605.62px;font-size:13.8px;color:#2a9a78;font-weight:normal;">29.7%</div>
<div class="r" style="left:699px;top:657px;width:405px;height:1px;background:#e1e2e3;"></div>
<div class="r" style="left:699px;top:658px;width:405px;height:1px;background:#f4f4f5;"></div>
<div class="t" style="right:1228px;top:651.60px;font-size:13px;color:#1c2b33;font-weight:normal;">400</div>
<div class="r" style="left:699px;top:685px;width:405px;height:1px;background:#e1e2e3;"></div>
<div class="r" style="left:699px;top:686px;width:405px;height:1px;background:#f4f4f5;"></div>
<div class="t" style="right:1228px;top:680.30px;font-size:13px;color:#1c2b33;font-weight:normal;">300</div>
<div class="r" style="left:699px;top:714px;width:405px;height:1px;background:#e1e2e3;"></div>
<div class="r" style="left:699px;top:715px;width:405px;height:1px;background:#f4f4f5;"></div>
<div class="t" style="right:1228px;top:709.00px;font-size:13px;color:#1c2b33;font-weight:normal;">200</div>
<div class="r" style="left:699px;top:743px;width:405px;height:1px;background:#e1e2e3;"></div>
<div class="r" style="left:699px;top:744px;width:405px;height:1px;background:#f4f4f5;"></div>
<div class="t" style="right:1228px;top:737.70px;font-size:13px;color:#1c2b33;font-weight:normal;">100</div>
<div class="r" style="left:699px;top:771px;width:405px;height:1px;background:#e1e2e3;"></div>
<div class="r" style="left:699px;top:772px;width:405px;height:1px;background:#f4f4f5;"></div>
<div class="t" style="right:1228px;top:766.40px;font-size:13px;color:#1c2b33;font-weight:normal;">0</div>
<div class="t" style="left:711px;transform:translateX(-50%);top:780.60px;font-size:13px;color:#1c2b33;font-weight:normal;">May 12</div>
<div class="t" style="left:799px;transform:translateX(-50%);top:780.60px;font-size:13px;color:#1c2b33;font-weight:normal;">Jun 1</div>
<div class="t" style="left:887px;transform:translateX(-50%);top:780.60px;font-size:13px;color:#1c2b33;font-weight:normal;">Jun 21</div>
<div class="t" style="left:975px;transform:translateX(-50%);top:780.60px;font-size:13px;color:#1c2b33;font-weight:normal;">Jul 11</div>
<div class="t" style="left:1063px;transform:translateX(-50%);top:780.60px;font-size:13px;color:#1c2b33;font-weight:normal;">Jul 31</div>
<div class="r" style="left:806.5px;top:821px;width:16px;height:4px;background:#86d4f8;border-radius:2px;"></div>
<div class="t" style="left:831.5px;top:816.15px;font-size:14px;color:#1c2b33;font-weight:normal;">Content interactions</div>
<div class="r" style="left:1136px;top:517px;width:494px;height:332px;background:linear-gradient(180deg,#ffffff 0%,#ffffff 80%,#fcfcfd 100%);border-radius:6px;box-shadow:0 0 8px rgba(0,100,170,0.09);"></div>
<div class="t" style="left:1152px;top:543.06px;font-size:16px;color:#1c2b33;font-weight:bold;"><span style="letter-spacing:-0.3px">Link clicks</span></div>
<svg class="r" style="left:1234px;top:544px;" width="14" height="14" viewBox="0 0 14 14"><circle cx="7" cy="7" r="6.2" fill="#1c2b33"/><rect x="6.1" y="6" width="1.8" height="4.5" fill="#fff"/><circle cx="7" cy="4" r="1.05" fill="#fff"/><rect x="5.4" y="6" width="1.6" height="1" fill="#fff"/></svg>
<div class="r" style="left:1497px;top:533px;width:117px;height:36px;background:#fff;border-radius:5px;box-sizing:border-box;border:1px solid #a3adb8;"></div>
<svg class="r" style="left:1510px;top:543px;" width="16" height="16" viewBox="0 0 16 16"><path d="M8,2 L8,9.5 M5.2,6.8 L8,9.6 L10.8,6.8" fill="none" stroke="#1c2b33" stroke-width="1.5"/><path d="M3,9.5 L3,11.8 Q3,13.5 4.8,13.5 L11.2,13.5 Q13,13.5 13,11.8 L13,9.5" fill="none" stroke="#1c2b33" stroke-width="1.5"/></svg>
<div class="t" style="left:1533px;top:543.30px;font-size:15px;color:#1c2b33;font-weight:normal;">Export</div>
<svg class="r" style="left:1588px;top:546px;" width="12" height="10" viewBox="0 0 12 10"><path d="M1,2.5 L11,2.5 L6,8 Z" fill="#1c2b33"/></svg>
<div class="t" style="left:1152px;top:589.07px;font-size:33px;color:#1c2b33;font-weight:normal;">150</div>
<svg class="r" style="left:1219px;top:605px;" width="12" height="14" viewBox="0 0 12 14"><path d="M6,13 L6,2.5 M2,6.5 L6,2.5 L10,6.5" fill="none" stroke="#2a9a78" stroke-width="1.35"/></svg>
<div class="t" style="left:1236px;top:605.62px;font-size:13.8px;color:#2a9a78;font-weight:normal;">57.9%</div>
<div class="r" style="left:1201px;top:657px;width:405px;height:1px;background:#e1e2e3;"></div>
<div class="r" style="left:1201px;top:658px;width:405px;height:1px;background:#f4f4f5;"></div>
<div class="t" style="right:726px;top:651.60px;font-size:13px;color:#1c2b33;font-weight:normal;">40</div>
<div class="r" style="left:1201px;top:685px;width:405px;height:1px;background:#e1e2e3;"></div>
<div class="r" style="left:1201px;top:686px;width:405px;height:1px;background:#f4f4f5;"></div>
<div class="t" style="right:726px;top:680.30px;font-size:13px;color:#1c2b33;font-weight:normal;">30</div>
<div class="r" style="left:1201px;top:714px;width:405px;height:1px;background:#e1e2e3;"></div>
<div class="r" style="left:1201px;top:715px;width:405px;height:1px;background:#f4f4f5;"></div>
<div class="t" style="right:726px;top:709.00px;font-size:13px;color:#1c2b33;font-weight:normal;">20</div>
<div class="r" style="left:1201px;top:743px;width:405px;height:1px;background:#e1e2e3;"></div>
<div class="r" style="left:1201px;top:744px;width:405px;height:1px;background:#f4f4f5;"></div>
<div class="t" style="right:726px;top:737.70px;font-size:13px;color:#1c2b33;font-weight:normal;">10</div>
<div class="r" style="left:1201px;top:771px;width:405px;height:1px;background:#e1e2e3;"></div>
<div class="r" style="left:1201px;top:772px;width:405px;height:1px;background:#f4f4f5;"></div>
<div class="t" style="right:726px;top:766.40px;font-size:13px;color:#1c2b33;font-weight:normal;">0</div>
<div class="t" style="left:1213px;transform:translateX(-50%);top:780.60px;font-size:13px;color:#1c2b33;font-weight:normal;">May 12</div>
<div class="t" style="left:1301px;transform:translateX(-50%);top:780.60px;font-size:13px;color:#1c2b33;font-weight:normal;">Jun 1</div>
<div class="t" style="left:1389px;transform:translateX(-50%);top:780.60px;font-size:13px;color:#1c2b33;font-weight:normal;">Jun 21</div>
<div class="t" style="left:1477px;transform:translateX(-50%);top:780.60px;font-size:13px;color:#1c2b33;font-weight:normal;">Jul 11</div>
<div class="t" style="left:1565px;transform:translateX(-50%);top:780.60px;font-size:13px;color:#1c2b33;font-weight:normal;">Jul 31</div>
<div class="r" style="left:1310.5px;top:821px;width:16px;height:4px;background:#86d4f8;border-radius:2px;"></div>
<div class="t" style="left:1335.5px;top:816.15px;font-size:14px;color:#1c2b33;font-weight:normal;">Facebook link clicks</div>
<div class="r" style="left:634px;top:857px;width:494px;height:200px;background:linear-gradient(180deg,#ffffff 0%,#ffffff 80%,#fcfcfd 100%);border-radius:6px;box-shadow:0 0 8px rgba(0,100,170,0.09);"></div>
<div class="t" style="left:650px;top:883.06px;font-size:16px;color:#1c2b33;font-weight:bold;">Visits</div>
<svg class="r" style="left:696px;top:884px;" width="14" height="14" viewBox="0 0 14 14"><circle cx="7" cy="7" r="6.2" fill="#1c2b33"/><rect x="6.1" y="6" width="1.8" height="4.5" fill="#fff"/><circle cx="7" cy="4" r="1.05" fill="#fff"/><rect x="5.4" y="6" width="1.6" height="1" fill="#fff"/></svg>
<div class="r" style="left:995px;top:873px;width:117px;height:36px;background:#fff;border-radius:5px;box-sizing:border-box;border:1px solid #a3adb8;"></div>
<svg class="r" style="left:1008px;top:883px;" width="16" height="16" viewBox="0 0 16 16"><path d="M8,2 L8,9.5 M5.2,6.8 L8,9.6 L10.8,6.8" fill="none" stroke="#1c2b33" stroke-width="1.5"/><path d="M3,9.5 L3,11.8 Q3,13.5 4.8,13.5 L11.2,13.5 Q13,13.5 13,11.8 L13,9.5" fill="none" stroke="#1c2b33" stroke-width="1.5"/></svg>
<div class="t" style="left:1031px;top:883.30px;font-size:15px;color:#1c2b33;font-weight:normal;">Export</div>
<svg class="r" style="left:1086px;top:886px;" width="12" height="10" viewBox="0 0 12 10"><path d="M1,2.5 L11,2.5 L6,8 Z" fill="#1c2b33"/></svg>
<div class="t" style="left:650px;top:929.07px;font-size:33px;color:#1c2b33;font-weight:normal;">21,417</div>
<svg class="r" style="left:757px;top:945px;" width="12" height="14" viewBox="0 0 12 14"><path d="M6,13 L6,2.5 M2,6.5 L6,2.5 L10,6.5" fill="none" stroke="#2a9a78" stroke-width="1.35"/></svg>
<div class="t" style="left:774px;top:945.62px;font-size:13.8px;color:#2a9a78;font-weight:normal;">26.9%</div>
<div class="r" style="left:699px;top:997px;width:405px;height:1px;background:#e1e2e3;"></div>
<div class="r" style="left:699px;top:998px;width:405px;height:1px;background:#f4f4f5;"></div>
<div class="t" style="right:1228px;top:991.60px;font-size:13px;color:#1c2b33;font-weight:normal;">2K</div>
<div class="r" style="left:699px;top:1025px;width:405px;height:1px;background:#e1e2e3;"></div>
<div class="r" style="left:699px;top:1026px;width:405px;height:1px;background:#f4f4f5;"></div>
<div class="t" style="right:1228px;top:1020.30px;font-size:13px;color:#1c2b33;font-weight:normal;">1.5K</div>
<div class="r" style="left:699px;top:1054px;width:405px;height:1px;background:#e1e2e3;"></div>
<div class="r" style="left:699px;top:1055px;width:405px;height:1px;background:#f4f4f5;"></div>
<div class="t" style="right:1228px;top:1049.00px;font-size:13px;color:#1c2b33;font-weight:normal;">1K</div>
<div class="r" style="left:1136px;top:857px;width:494px;height:200px;background:linear-gradient(180deg,#ffffff 0%,#ffffff 80%,#fcfcfd 100%);border-radius:6px;box-shadow:0 0 8px rgba(0,100,170,0.09);"></div>
<div class="t" style="left:1152px;top:883.06px;font-size:16px;color:#1c2b33;font-weight:bold;">Follows</div>
<svg class="r" style="left:1213px;top:884px;" width="14" height="14" viewBox="0 0 14 14"><circle cx="7" cy="7" r="6.2" fill="#1c2b33"/><rect x="6.1" y="6" width="1.8" height="4.5" fill="#fff"/><circle cx="7" cy="4" r="1.05" fill="#fff"/><rect x="5.4" y="6" width="1.6" height="1" fill="#fff"/></svg>
<div class="r" style="left:1497px;top:873px;width:117px;height:36px;background:#fff;border-radius:5px;box-sizing:border-box;border:1px solid #a3adb8;"></div>
<svg class="r" style="left:1510px;top:883px;" width="16" height="16" viewBox="0 0 16 16"><path d="M8,2 L8,9.5 M5.2,6.8 L8,9.6 L10.8,6.8" fill="none" stroke="#1c2b33" stroke-width="1.5"/><path d="M3,9.5 L3,11.8 Q3,13.5 4.8,13.5 L11.2,13.5 Q13,13.5 13,11.8 L13,9.5" fill="none" stroke="#1c2b33" stroke-width="1.5"/></svg>
<div class="t" style="left:1533px;top:883.30px;font-size:15px;color:#1c2b33;font-weight:normal;">Export</div>
<svg class="r" style="left:1588px;top:886px;" width="12" height="10" viewBox="0 0 12 10"><path d="M1,2.5 L11,2.5 L6,8 Z" fill="#1c2b33"/></svg>
<div class="t" style="left:1152px;top:929.07px;font-size:33px;color:#1c2b33;font-weight:normal;">533</div>
<svg class="r" style="left:1219px;top:945px;" width="12" height="14" viewBox="0 0 12 14"><path d="M6,13 L6,2.5 M2,6.5 L6,2.5 L10,6.5" fill="none" stroke="#2a9a78" stroke-width="1.35"/></svg>
<div class="t" style="left:1236px;top:945.62px;font-size:13.8px;color:#2a9a78;font-weight:normal;">2.9%</div>
<div class="r" style="left:1201px;top:1009px;width:405px;height:1px;background:#e1e2e3;"></div>
<div class="r" style="left:1201px;top:1010px;width:405px;height:1px;background:#f4f4f5;"></div>
<div class="t" style="right:726px;top:1003.60px;font-size:13px;color:#1c2b33;font-weight:normal;">80</div>
<div class="r" style="left:1201px;top:1037px;width:405px;height:1px;background:#e1e2e3;"></div>
<div class="r" style="left:1201px;top:1038px;width:405px;height:1px;background:#f4f4f5;"></div>
<div class="t" style="right:726px;top:1032.30px;font-size:13px;color:#1c2b33;font-weight:normal;">60</div>
<svg class="r" style="left:0;top:0" width="1919" height="1031" viewBox="0 0 1919 1031"><polyline points="710.2,431.7 719.3,431.1 724.1,424.5 728.6,379.3 732.8,394.3 737.3,423.3 741.6,423.3 746.4,428.7 750.6,430.5 754.8,420.2 759.6,429.3 763.9,430.8 790.0,431.3 812.0,431.5 818.0,430.8 822.0,431.3 825.9,431.1 830.1,413.6 834.3,428.7 843.4,431.1 852.4,361.8 856.6,408.8 860.8,425.7 869.3,430.5 873.5,429.8 878.3,429.9 882.5,419.0 887.3,419.0 892.2,429.9 902.4,431.7 909.0,431.7 913.9,429.9 918.7,431.3 923.5,430.5 927.7,427.5 931.9,351.0 936.1,378.7 940.7,345.5 945.2,414.2 949.4,426.3 953.6,428.7 959.0,429.9 971.1,430.5 975.9,420.8 980.1,426.3 984.7,402.8 989.2,429.3 993.4,430.5 998.2,429.3 1002.4,430.5 1010.0,431.0 1020.0,430.8 1028.9,431.7 1033.5,401.0 1038.0,428.7 1042.2,429.3 1046.4,430.8 1060.0,431.0 1075.0,431.2 1091.0,431.3 1095.2,337.1 1099.4,390.1 1103.9,367.8" fill="none" stroke="#86d4f8" stroke-width="2" stroke-linejoin="round" stroke-linecap="round"/><polyline points="1212.0,431.7 1221.1,431.7 1225.9,423.9 1230.7,357.6 1234.9,378.1 1239.2,422.0 1244.0,419.0 1248.2,428.7 1252.4,429.9 1257.2,424.5 1261.4,429.3 1269.3,430.8 1290.0,431.4 1327.7,431.7 1331.9,413.0 1336.7,429.9 1341.6,431.3 1345.8,431.1 1350.0,399.8 1354.2,382.3 1358.4,412.4 1362.7,428.1 1371.7,430.8 1375.9,429.9 1380.1,429.9 1384.9,420.8 1389.8,421.4 1394.0,430.5 1411.4,431.7 1416.3,429.9 1420.5,431.3 1424.7,431.3 1428.9,428.7 1433.7,368.4 1438.0,405.2 1442.4,385.3 1447.0,419.0 1451.2,428.7 1456.6,429.9 1472.9,431.3 1477.7,421.4 1482.5,428.1 1486.5,412.4 1491.0,429.3 1496.4,430.5 1530.7,431.7 1535.2,410.0 1539.8,429.3 1548.2,431.1 1592.8,431.7 1597.0,367.2 1601.4,400.4 1606.0,395.5" fill="none" stroke="#86d4f8" stroke-width="2" stroke-linejoin="round" stroke-linecap="round"/><polyline points="710.2,771.7 719.3,771.7 724.1,756.0 728.3,692.2 732.8,685.5 737.3,758.4 741.6,759.6 746.4,768.7 750.6,769.9 755.1,753.0 759.3,768.1 763.9,770.8 794.0,771.0 798.8,770.5 803.0,771.7 812.7,770.8 825.3,771.7 830.1,764.5 834.7,771.7 839.2,770.8 843.4,771.7 847.6,730.7 852.2,705.4 856.6,753.6 860.8,767.5 869.3,771.1 874.1,769.9 878.3,771.1 883.1,752.4 887.3,768.1 892.2,770.8 909.6,771.7 913.9,769.3 918.7,771.1 922.9,771.1 927.7,751.8 931.6,704.8 936.1,680.1 940.7,694.6 944.8,762.7 949.4,769.9 953.6,771.1 958.4,769.9 962.7,771.3 971.1,769.3 975.9,759.0 980.1,756.6 984.7,750.6 989.2,771.1 998.2,770.5 1002.4,771.7 1015.7,770.8 1028.9,771.7 1033.1,745.8 1037.6,771.1 1042.2,770.1 1050.6,771.7 1091.0,771.7 1095.2,668.7 1099.4,745.2 1103.9,713.3" fill="none" stroke="#86d4f8" stroke-width="2" stroke-linejoin="round" stroke-linecap="round"/><polyline points="1212.0,771.7 1226.5,771.7 1230.7,769.3 1234.9,757.2 1239.2,771.7 1279.5,771.7 1283.7,768.7 1288.0,771.7 1345.2,771.7 1349.4,769.3 1354.2,763.3 1359.0,769.3 1363.3,771.7 1380.7,771.7 1385.2,765.9 1389.8,768.7 1394.0,771.7 1428.9,771.7 1433.7,757.2 1438.0,766.3 1442.4,676.5 1447.0,748.8 1451.2,751.2 1455.4,763.3 1460.2,769.3 1465.1,769.3 1469.3,763.3 1473.5,769.3 1477.7,748.8 1482.5,757.2 1486.7,757.2 1491.0,766.3 1495.8,766.3 1500.0,763.3 1504.2,765.9 1508.4,769.0 1516.9,769.0 1521.7,766.3 1526.5,771.7 1530.7,771.7 1534.9,765.9 1539.8,763.3 1544.0,771.7 1574.7,771.7 1579.5,765.9 1583.7,769.0 1588.2,765.9 1592.8,771.7 1597.0,722.3 1601.4,754.8 1606.0,754.8" fill="none" stroke="#86d4f8" stroke-width="2" stroke-linejoin="round" stroke-linecap="round"/><polyline points="710.0,1060.0 724.0,1060.0 729.0,1013.5 733.5,1060.0 925.0,1060.0 931.0,1030.0 934.0,1014.0 937.5,1012.5 941.0,1030.0 946.0,1060.0 1090.0,1060.0 1095.0,1017.0 1099.0,1060.0 1103.9,1023.0" fill="none" stroke="#86d4f8" stroke-width="2" stroke-linejoin="round" stroke-linecap="round"/><polyline points="1212.0,1060.0 1429.0,1060.0 1433.8,996.5 1438.0,1060.0 1592.0,1060.0 1597.0,1012.5 1601.0,1060.0" fill="none" stroke="#86d4f8" stroke-width="2" stroke-linejoin="round" stroke-linecap="round"/></svg>
<div class="r" style="left:0px;top:1031px;width:1919px;height:1px;background:#090b16;"></div>
<div class="r" style="left:0px;top:1032px;width:1919px;height:47px;background:linear-gradient(90deg, #1d202b 0%, #1c2038 20%, #17205a 42%, #17205a 60%, #1b1f38 78%, #1d1f2a 88%, #1d1f29 100%);"></div>
<div class="r" style="left:0px;top:1032px;width:1919px;height:1px;background:rgba(255,255,255,0.12);"></div>
<svg class="r" style="left:17px;top:1036px;" width="30" height="32" viewBox="0 0 30 32"><circle cx="18" cy="15" r="5" fill="#f6a01a"/><path d="M4,29 Q1,29 1.5,25.5 Q2,22.5 5,22.5 Q6,18 11,18 Q15,18 17,21.5 Q19,20.5 21,21.5 Q24,22.5 24,26 Q24,29 21,29 Z" fill="#a9c8f0"/><path d="M4,29 Q1,29 1.5,26 L24,26 Q24,29 21,29 Z" fill="#7fa6dc"/></svg>
<svg class="r" style="left:29px;top:1037px;" width="18" height="18" viewBox="0 0 18 18"><circle cx="9" cy="9" r="8" fill="#ff8e98"/><text x="9" y="13.2" text-anchor="middle" font-size="11.5" font-family="Liberation Sans" fill="#1a1a1a">2</text></svg>
<div class="t" style="left:51px;top:1041.84px;font-size:12px;color:#ffffff;font-weight:bold;">90°F</div>
<div class="t" style="left:51px;top:1057.42px;font-size:12.5px;color:#d5d6dc;font-weight:normal;">Mostly cloudy</div>
<svg class="r" style="left:639px;top:1045px;" width="23" height="23" viewBox="0 0 23 23"><rect x="0" y="0" width="11" height="11" fill="#3ec1f8"/><rect x="12" y="0" width="11" height="11" fill="#3ec1f8"/><rect x="0" y="12" width="11" height="11" fill="#2fa9ef"/><rect x="12" y="12" width="11" height="11" fill="#2fa9ef"/></svg>
<div class="r" style="left:675px;top:1040px;width:220px;height:31px;background:rgba(120,130,190,0.28);border-radius:16px;box-sizing:border-box;border:1px solid rgba(255,255,255,0.07);"></div>
<svg class="r" style="left:684px;top:1045px;" width="22" height="22" viewBox="0 0 22 22"><circle cx="10" cy="10" r="6" fill="none" stroke="#e6e8f0" stroke-width="1.6"/><path d="M14.3,14.3 L18.5,18.5" stroke="#e6e8f0" stroke-width="1.7"/></svg>
<div class="t" style="left:712px;top:1049.15px;font-size:14px;color:#dfe1ea;font-weight:normal;">Search</div>
<svg class="r" style="left:843px;top:1047px;" width="50" height="23" viewBox="0 0 50 23"><path d="M6,14 L8.5,6 L11,9 L14,2.5 L18,7 L21,4.5 L26,10 L29,5 L32,7 L35,3.5 L38,6 L41,3 L44,6 L46,4 L48,8 L48,14 Z" fill="#c5cbcc"/><path d="M14,2.5 L16,9 L12,12 Z M35,3.5 L36,10 L33,11 Z" fill="#8f9697"/><path d="M6,15 Q24,7.5 48,10.5 L48,16 L6,16 Z" fill="#3f8d4f"/><path d="M0,16.5 Q10,10.5 28,12.5 Q44,13.5 47,15 Q42,22 22,22.5 Q6,22.5 0,16.5 Z" fill="#c3a92e"/><rect x="6" y="13" width="9" height="4" fill="#e9e9ec"/><rect x="15" y="14" width="7" height="3.5" fill="#d9d9de"/><rect x="25" y="13.5" width="10" height="4" fill="#e9e9ec"/><rect x="29.5" y="8" width="1.6" height="6" fill="#e0e0e0"/><rect x="17" y="14" width="3" height="3" fill="#d8703e"/></svg>
<svg class="r" style="left:906px;top:1043px;" width="28" height="26" viewBox="0 0 28 26"><defs><linearGradient id="tv1" x1="0" y1="0" x2="1" y2="1"><stop offset="0" stop-color="#fafafa"/><stop offset="1" stop-color="#d8d8d8"/></linearGradient></defs><rect x="1" y="8" width="18" height="15.5" rx="1.5" fill="#6e6e6e"/><rect x="7" y="2" width="18" height="16" rx="1.5" fill="url(#tv1)"/><rect x="7" y="8" width="12" height="10" fill="#a9a9a9" opacity="0.55"/></svg>
<svg class="r" style="left:950px;top:1043px;" width="26" height="26" viewBox="0 0 26 26"><defs><linearGradient id="cp1" x1="0" y1="0" x2="0.3" y2="1"><stop offset="0" stop-color="#1a8df0"/><stop offset="0.55" stop-color="#41c66e"/><stop offset="1" stop-color="#f6c431"/></linearGradient><linearGradient id="cp2" x1="0.7" y1="0" x2="0.3" y2="1"><stop offset="0" stop-color="#5a6cf3"/><stop offset="0.5" stop-color="#d95bd0"/><stop offset="1" stop-color="#ff8a3a"/></linearGradient></defs><path d="M9.5,2.5 L14,2.5 Q16.5,2.5 15.8,5 L12,18.5 Q11,22.5 7.5,22.5 L5,22.5 Q2,22.5 2.5,19.5 L6,6.5 Q7,2.5 9.5,2.5 Z" fill="url(#cp1)"/><path d="M18.5,3.5 L21,3.5 Q24,3.5 23.5,6.5 L20.5,19.5 Q19.5,23.5 16,23.5 L12.5,23.5 Q10,23.5 10.6,21 L14.5,7 Q15.5,3.5 18.5,3.5 Z" fill="url(#cp2)"/></svg>
<svg class="r" style="left:994px;top:1043px;" width="26" height="26" viewBox="0 0 26 26"><rect x="1" y="1" width="24" height="24" rx="3.2" fill="#3d8fd6"/><path d="M3.5,22.5 L13,3.5 L19.5,3.5 L19.5,22.5 L15.5,22.5 L15.5,15.5 Q13.5,17.5 12,15.5 L8.5,22.5 Z" fill="#fff"/><circle cx="14.2" cy="12.3" r="1.7" fill="#3d8fd6"/><path d="M12,9 L15,9" stroke="#3d8fd6" stroke-width="1.2"/></svg>
<svg class="r" style="left:1038px;top:1043px;" width="26" height="26" viewBox="0 0 26 26"><rect x="1" y="1" width="24" height="24" fill="#1f3bb3"/><path d="M8,5 L12,5 L12,18 L19,18 L19,22 L8,22 Z" fill="#fff"/></svg>
<svg class="r" style="left:1081px;top:1042px;" width="28" height="28" viewBox="0 0 28 28"><circle cx="14" cy="14" r="11.5" fill="#1ed760"/><path d="M7,10.5 C11,9 17,9.5 21,12 M7.8,14 C11,13 16,13.3 19.5,15.3 M8.5,17.3 C11.5,16.5 15,16.8 17.8,18.3" fill="none" stroke="#111" stroke-width="2" stroke-linecap="round"/></svg>
<svg class="r" style="left:1125px;top:1043px;" width="28" height="26" viewBox="0 0 28 26"><path d="M2,5 L10,5 L12,7.5 L26,7.5 L26,24 L2,24 Z" fill="#f3c13a"/><path d="M2,10 L26,10 L26,24 L2,24 Z" fill="#ffd75e"/><rect x="7" y="17" width="14" height="7" rx="1" fill="#1d8fe1"/></svg>
<div class="r" style="left:1134px;top:1072px;width:9px;height:3px;background:#9a9caa;border-radius:2px;"></div>
<svg class="r" style="left:1169px;top:1042px;" width="28" height="28" viewBox="0 0 28 28"><defs><linearGradient id="eg" x1="0.9" y1="0.2" x2="0.1" y2="0.9"><stop offset="0" stop-color="#6fdc6b"/><stop offset="0.45" stop-color="#2cb5e8"/><stop offset="1" stop-color="#1562c9"/></linearGradient></defs><path d="M14,2 C21,2 26,7 26,12.5 C26,16 23.5,18 20.5,18 C17.5,18 15.5,16.5 15.5,14.5 C15.5,13 16.5,12.5 16.5,11 C16.5,8.5 13.5,7 10.5,7.5 C6.5,8 3,11.5 2.5,15 C2,8 7,2 14,2 Z" fill="url(#eg)"/><path d="M2.5,15 C3,11.5 6.5,8 10.5,7.5 C13.5,7 16.5,8.5 16.5,11 C16.5,12.5 15.5,13 15.5,14.5 C15.5,16.5 17.5,18 20.5,18 C23,18 24.5,17 25.5,16 C24,22 19,26 13,26 C7,26 2.5,21 2.5,15 Z" fill="#1f5fc0"/><circle cx="9.5" cy="20.5" r="5.8" fill="#3a3f3a"/><circle cx="9.5" cy="20.5" r="4.6" fill="#9aa39a"/><path d="M7,19 Q9.5,16 12,19 L12,23 L7,23 Z" fill="#e8e4dc"/></svg>
<div class="r" style="left:1178px;top:1072px;width:9px;height:3px;background:#9a9caa;border-radius:2px;"></div>
<div class="r" style="left:1207px;top:1036px;width:40px;height:41px;background:rgba(255,255,255,0.07);border-radius:5px;"></div>
<svg class="r" style="left:1213px;top:1043px;" width="28" height="28" viewBox="0 0 28 28"><defs><linearGradient id="og" x1="0" y1="0" x2="0" y2="1"><stop offset="0" stop-color="#ff2a3a"/><stop offset="1" stop-color="#c8101f"/></linearGradient></defs><ellipse cx="14" cy="13" rx="11" ry="11.3" fill="url(#og)"/><ellipse cx="14" cy="13" rx="4.6" ry="8.6" fill="#1b2450"/></svg>
<div class="r" style="left:1219px;top:1072px;width:16px;height:3px;background:#47c0f5;border-radius:2px;"></div>
<svg class="r" style="left:1257px;top:1043px;" width="30" height="28" viewBox="0 0 30 28"><circle cx="13" cy="14" r="12" fill="#5865f2"/><path d="M7,17.5 Q6.5,12 9,9 Q11,8.3 12,8.8 L14,8.8 Q15,8.3 17,9 Q19.5,12 19,17.5 Q17.5,18.7 16,19 L15.2,17.6 Q13,18.2 10.8,17.6 L10,19 Q8.5,18.7 7,17.5 Z" fill="#fff"/><circle cx="10.7" cy="14" r="1.3" fill="#5865f2"/><circle cx="15.3" cy="14" r="1.3" fill="#5865f2"/><circle cx="22.5" cy="6.5" r="6" fill="#f0524f"/><circle cx="22.5" cy="6.5" r="2.3" fill="#fff"/></svg>
<div class="r" style="left:1265px;top:1072px;width:9px;height:3px;background:#9a9caa;border-radius:2px;"></div>
<svg class="r" style="left:1662px;top:1045px;" width="20" height="20" viewBox="0 0 20 20"><path d="M4.5,13 L10,7.5 L15.5,13" fill="none" stroke="#eee" stroke-width="1.5"/></svg>
<div class="t" style="left:1711px;transform:translateX(-50%);top:1042.84px;font-size:12px;color:#ececec;font-weight:normal;">ENG</div>
<div class="t" style="left:1711px;transform:translateX(-50%);top:1058.84px;font-size:12px;color:#ececec;font-weight:normal;">US</div>
<svg class="r" style="left:1738px;top:1045px;" width="22" height="22" viewBox="0 0 22 22"><path d="M2.5,9 Q11,1.5 19.5,9 M5,12 Q11,6.5 17,12 M7.5,15 Q11,12 14.5,15" fill="none" stroke="#eee" stroke-width="1.5"/><circle cx="11" cy="18" r="1.3" fill="#eee"/></svg>
<svg class="r" style="left:1762px;top:1045px;" width="22" height="22" viewBox="0 0 22 22"><path d="M3,8.5 L6,8.5 L10,5 L10,17 L6,13.5 L3,13.5 Z" fill="none" stroke="#eee" stroke-width="1.3" stroke-linejoin="round"/><path d="M13,8 Q15,11 13,14 M15.5,6 Q19,11 15.5,16" fill="none" stroke="#eee" stroke-width="1.3"/></svg>
<svg class="r" style="left:1786px;top:1045px;" width="22" height="22" viewBox="0 0 22 22"><rect x="2.5" y="7" width="15" height="9" rx="1.5" fill="none" stroke="#eee" stroke-width="1.3"/><rect x="17.5" y="9.5" width="2" height="4" fill="#eee"/><path d="M7,3 L4.5,9 L8,9 L6,14" fill="none" stroke="#eee" stroke-width="1.2"/></svg>
<div class="t" style="right:42px;top:1041.42px;font-size:12.5px;color:#ececec;font-weight:normal;">2:00 PM</div>
<div class="t" style="right:42px;top:1057.42px;font-size:12.5px;color:#ececec;font-weight:normal;">8/11/2025</div>
<svg class="r" style="left:1881px;top:1044px;" width="24" height="24" viewBox="0 0 24 24"><path d="M5,16 Q7,14 7,10.5 Q7,6 11.5,6 Q16,6 16,10.5 Q16,14 18,16 Z" fill="#eee"/><path d="M9.5,18 Q11.5,20 13.5,18" fill="none" stroke="#eee" stroke-width="1.4"/><text x="9" y="14" font-size="6" font-family="Liberation Sans" font-weight="bold" fill="#1d1f29">z</text><text x="16.5" y="8" font-size="6" font-family="Liberation Sans" font-weight="bold" fill="#eee">z</text></svg>
<div class="r" style="left:1889px;top:84px;width:15px;height:947px;background:#ffffff;"></div>
<div class="r" style="left:1893px;top:193px;width:7px;height:690px;background:#d4d9de;border-radius:4px;"></div>
<svg class="r" style="left:1889px;top:85px;" width="15" height="12" viewBox="0 0 15 12"><path d="M4,8 L7.5,4.5 L11,8" fill="none" stroke="#505560" stroke-width="1.5"/></svg>
<svg class="r" style="left:1889px;top:1017px;" width="15" height="12" viewBox="0 0 15 12"><path d="M4,4 L7.5,7.5 L11,4" fill="none" stroke="#505560" stroke-width="1.5"/></svg>
<div class="r" style="left:1904px;top:84px;width:15px;height:947px;background:#262a36;border-radius:6px 0 0 0;"></div>
<svg class="r" style="left:1904px;top:85px;" width="15" height="12" viewBox="0 0 15 12"><path d="M4,8 L7.5,4.5 L11,8" fill="none" stroke="#9a9ea8" stroke-width="1.5"/></svg>
<svg class="r" style="left:1904px;top:1017px;" width="15" height="12" viewBox="0 0 15 12"><path d="M4,4 L7.5,7.5 L11,4" fill="none" stroke="#9a9ea8" stroke-width="1.5"/></svg>

</body></html>
